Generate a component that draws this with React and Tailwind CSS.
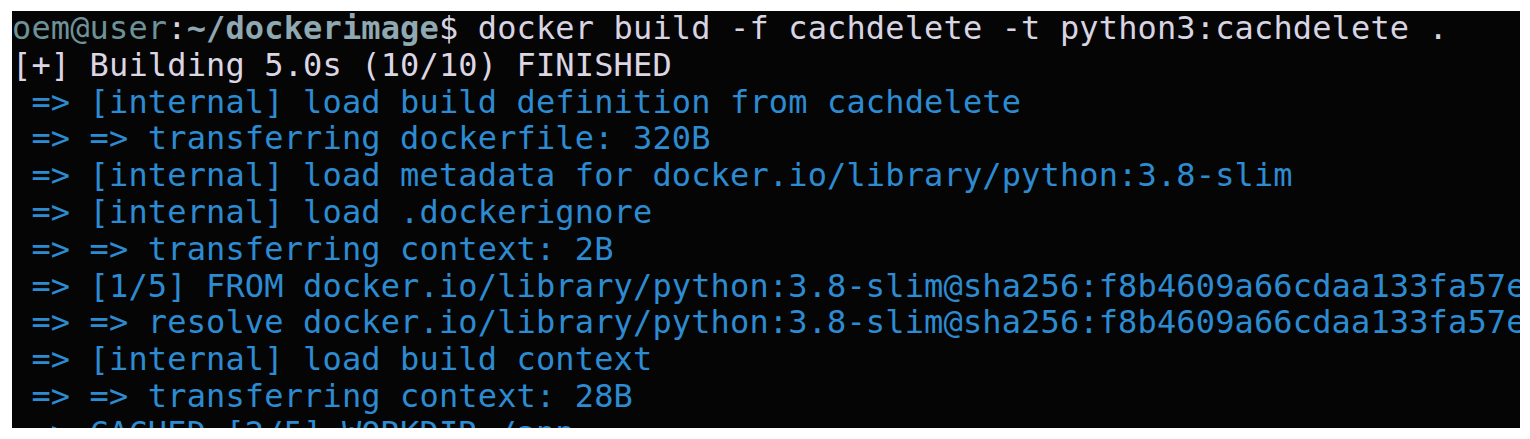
export default function App() {
  const blue = [
    " => [internal] load build definition from cachdelete",
    " => => transferring dockerfile: 320B",
    " => [internal] load metadata for docker.io/library/python:3.8-slim",
    " => [internal] load .dockerignore",
    " => => transferring context: 2B",
    " => [1/5] FROM docker.io/library/python:3.8-slim@sha256:f8b4609a66cdaa133fa57e",
    " => => resolve docker.io/library/python:3.8-slim@sha256:f8b4609a66cdaa133fa57e",
    " => [internal] load build context",
    " => => transferring context: 28B",
    " => CACHED [2/5] WORKDIR /app",
  ];
  return (
    <div className="w-[1530px] h-[439px] bg-white pt-[11px] pl-[12px]">
      <div
        className="w-[1508px] h-[417px] bg-[#050505] overflow-hidden"
        style={{ fontFamily: '"DejaVu Sans Mono", "Liberation Mono", monospace' }}
      >
        <div className="-mt-[1px] text-[32px] leading-[36.8px] tracking-[0.14px] whitespace-pre">
          <div>
            <span className="text-[#6e9298]">oem@user</span>
            <span className="text-[#d8d4e2]">:</span>
            <span className="text-[#8fa8b2] font-bold">~/dockerimage</span>
            <span className="text-[#d8d4e2]">$ docker build -f cachdelete -t python3:cachdelete .</span>
          </div>
          <div className="text-[#dcd6e4]">[+] Building 5.0s (10/10) FINISHED</div>
          {blue.map((l, i) => (
            <div key={i} className="text-[#2d8bd2]">{l}</div>
          ))}
        </div>
      </div>
    </div>
  );
}
